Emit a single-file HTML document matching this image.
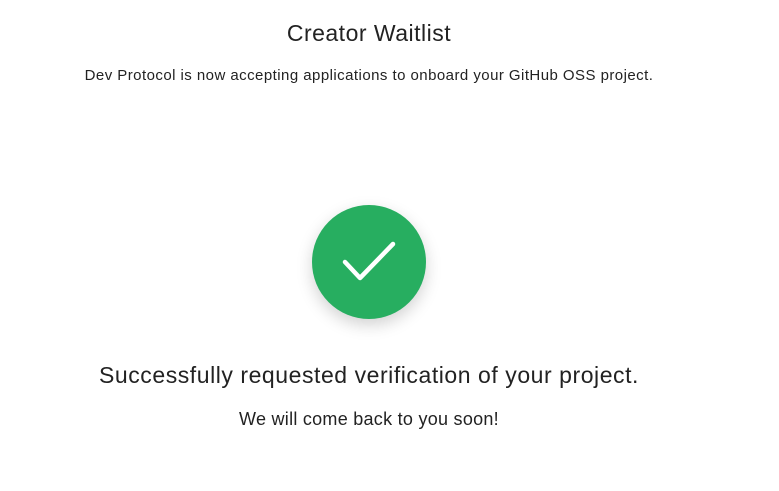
<!DOCTYPE html>
<html><head><style>
body{margin:0;width:779px;height:491px;background:#fff;font-family:"Liberation Sans",sans-serif;color:#222;position:relative;overflow:hidden}
.t{position:absolute;left:0;width:738px;text-align:center;white-space:nowrap}
</style></head><body>
<div class="t" style="top:20px;font-size:23px;letter-spacing:0.5px;">Creator Waitlist</div>
<div class="t" style="top:67px;font-size:15px;letter-spacing:0.45px;">Dev Protocol is now accepting applications to onboard your GitHub OSS project.</div>
<div style="position:absolute;left:312px;top:205px;width:114px;height:114px;border-radius:50%;background:#27ae60;box-shadow:0 6px 16px rgba(0,0,0,0.18)"></div>
<svg style="position:absolute;left:0;top:0" width="779" height="491"><path d="M345 262 L360 278 L393 244" fill="none" stroke="#fff" stroke-width="4.5" stroke-linecap="round" stroke-linejoin="round"/></svg>
<div class="t" style="top:362px;font-size:23px;letter-spacing:0.55px;">Successfully requested verification of your project.</div>
<div class="t" style="top:409px;font-size:18px;letter-spacing:0.27px;">We will come back to you soon!</div>
</body></html>
